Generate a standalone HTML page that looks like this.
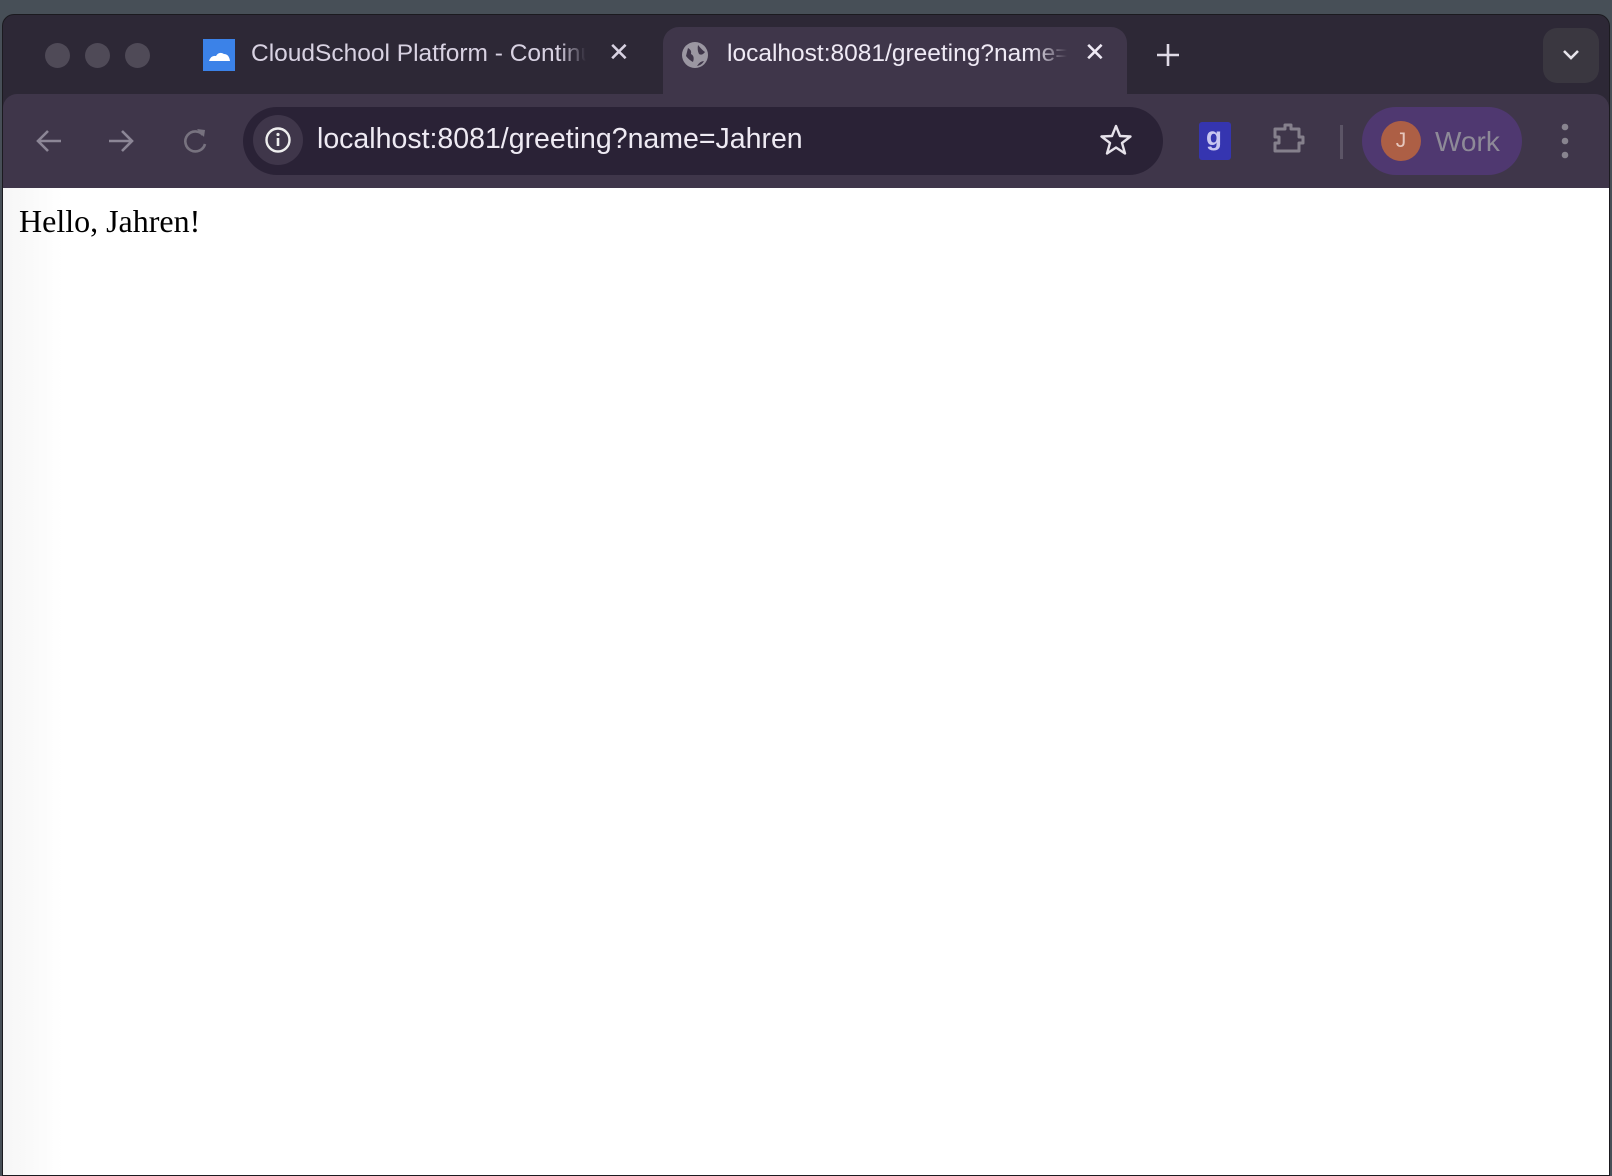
<!DOCTYPE html>
<html><head><meta charset="utf-8"><style>
html,body{margin:0;padding:0;width:1612px;height:1166px;overflow:hidden;background:#474f57;font-family:"Liberation Sans",sans-serif}
.win{position:absolute;left:2px;top:14px;width:1606px;height:1160px;background:#2d2836;border-radius:12px 12px 0 0;overflow:hidden;border:1px solid #1b1a1f}
.abs{position:absolute}
.light{position:absolute;top:28px;width:25px;height:25px;border-radius:50%;background:#4f4a57}
.tabtxt{position:absolute;font-size:24.5px;white-space:nowrap;overflow:hidden}
.content{position:absolute;left:0;top:173px;width:1606px;height:990px;background:#fff}
</style></head><body>
<div class="win">
  <div class="light" style="left:42px"></div>
  <div class="light" style="left:82px"></div>
  <div class="light" style="left:122px"></div>
  <div class="abs" style="left:200px;top:24px;width:32px;height:32px;background:#3b82e8"></div>
  <svg class="abs" style="left:200px;top:24px" width="32" height="32"><path d="M6 22 Q8 16 13 17 Q16 12 21 15 Q26 15 27 22 Z" fill="#fff"/></svg>
  <div class="tabtxt" style="left:248px;top:25px;width:335px;color:#d8d2e2;-webkit-mask-image:linear-gradient(90deg,#000 92%,transparent)">CloudSchool Platform - Continuous</div>
  <div class="abs" style="left:605px;top:22px;color:#d8d2e2;font-size:26px">✕</div>
  <div class="abs" style="left:660px;top:12px;width:464px;height:80px;background:#3f364a;border-radius:16px 16px 0 0"></div>
  <svg class="abs" style="left:677px;top:25px" width="30" height="30" viewBox="0 0 30 30"><circle cx="15" cy="15" r="13" fill="#9b97a2"/><path d="M8 8 Q12 10 11 14 Q15 16 13 22 Q9 20 6 16 Z M18 5 Q22 10 25 12 Q22 16 19 14 Q17 10 18 5 Z M17 26 Q20 21 24 21 Q22 25 17 26Z" fill="#3f364a"/></svg>
  <div class="tabtxt" style="left:724px;top:25px;width:340px;color:#efeaf5;-webkit-mask-image:linear-gradient(90deg,#000 90%,transparent)">localhost:8081/greeting?name=Jahren</div>
  <div class="abs" style="left:1081px;top:22px;color:#efeaf5;font-size:26px">✕</div>
  <svg class="abs" style="left:1152px;top:27px" width="26" height="26"><path d="M13 2V24M2 13H24" stroke="#e0dbe7" stroke-width="2.6"/></svg>
  <div class="abs" style="left:1540px;top:13px;width:56px;height:55px;background:#3a3740;border-radius:14px"></div>
  <svg class="abs" style="left:1558px;top:32px" width="20" height="16"><path d="M3 4L10 11L17 4" stroke="#e8e5ec" stroke-width="2.6" fill="none"/></svg>
  <div class="abs" style="left:0;top:79px;width:1606px;height:94px;background:#3f364a;border-radius:14px 14px 0 0"></div>
  <div class="abs" style="left:660px;top:70px;width:464px;height:12px;background:#3f364a"></div>
  <svg class="abs" style="left:30px;top:110px" width="180" height="34"><g stroke="#8c8696" stroke-width="2.6" fill="none"><path d="M28 16H6M15 6L5 16L15 26"/><path d="M76 16H98M89 6L99 16L89 26"/></g><path d="M170 10A10 10 0 1 0 172 19" stroke="#77727f" stroke-width="2.6" fill="none"/><path d="M164 4L172 5L171 12Z" fill="#77727f"/></svg>
  <div class="abs" style="left:240px;top:92px;width:920px;height:68px;background:#2a2236;border-radius:34px"></div>
  <div class="abs" style="left:250px;top:100px;width:50px;height:50px;background:#3f364a;border-radius:50%"></div>
  <svg class="abs" style="left:261px;top:111px" width="28" height="28"><circle cx="14" cy="14" r="11.5" stroke="#eee" stroke-width="2.4" fill="none"/><path d="M14 12V20" stroke="#eee" stroke-width="2.6"/><circle cx="14" cy="8.5" r="1.6" fill="#eee"/></svg>
  <div class="abs" style="left:314px;top:108px;font-size:28.5px;color:#eeeaf3">localhost:8081/greeting?name=Jahren</div>
  <svg class="abs" style="left:1096px;top:108px" width="34" height="34"><path d="M17 3L21 13L31.5 13.5L23 20L26 30.5L17 24.5L8 30.5L11 20L2.5 13.5L13 13Z" stroke="#e6e2ea" stroke-width="2.4" fill="none" stroke-linejoin="round"/></svg>
  <div class="abs" style="left:1196px;top:107px;width:32px;height:38px;background:#3535b0;border-radius:3px"></div>
  <div class="abs" style="left:1203px;top:106px;font-size:26px;color:#c8c6f0;font-weight:bold">g</div>
  <svg class="abs" style="left:1268px;top:106px" width="40" height="40"><path d="M4 8H14V4H20V8H28V16H32V22H28V30H4V22H8V16H4Z" stroke="#85808c" stroke-width="3" fill="none" stroke-linejoin="round"/></svg>
  <div class="abs" style="left:1337px;top:110px;width:3px;height:34px;background:#5c5566"></div>
  <div class="abs" style="left:1359px;top:92px;width:160px;height:68px;background:#4f3870;border-radius:34px"></div>
  <div class="abs" style="left:1378px;top:106px;width:40px;height:40px;background:#ad5f45;border-radius:50%;color:#e6c7bd;font-size:21px;text-align:center;line-height:40px">J</div>
  <div class="abs" style="left:1432px;top:111px;font-size:28px;color:#8e8a98">Work</div>
  <svg class="abs" style="left:1556px;top:106px" width="12" height="40"><g fill="#88848f"><circle cx="6" cy="6" r="3.3"/><circle cx="6" cy="20" r="3.3"/><circle cx="6" cy="34" r="3.3"/></g></svg>
  <div class="content">
    <div class="abs" style="left:0;top:0;width:60px;height:990px;background:linear-gradient(90deg,#f6f6f6,#fff)"></div>
    <div class="abs" style="left:16px;top:15px;font-family:'Liberation Serif',serif;font-size:32px;color:#000">Hello, Jahren!</div>
  </div>
</div>
</body></html>
